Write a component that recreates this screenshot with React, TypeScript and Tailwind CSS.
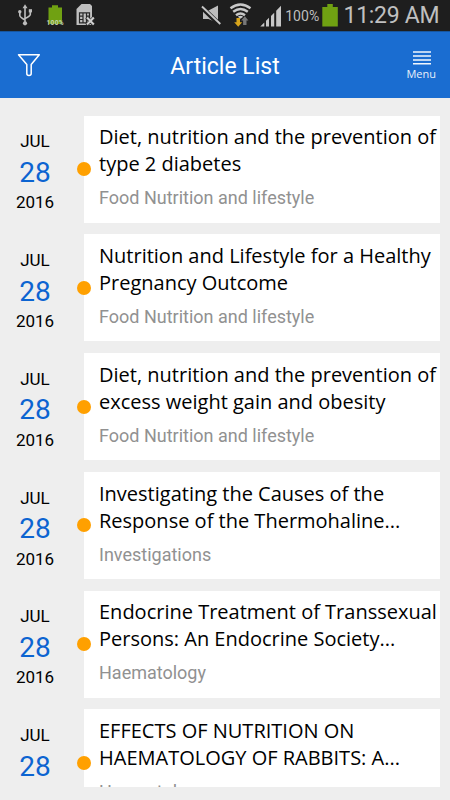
const articles = [
  { lines: ['Diet, nutrition and the prevention of', 'type 2 diabetes'], category: 'Food Nutrition and lifestyle' },
  { lines: ['Nutrition and Lifestyle for a Healthy', 'Pregnancy Outcome'], category: 'Food Nutrition and lifestyle' },
  { lines: ['Diet, nutrition and the prevention of', 'excess weight gain and obesity'], category: 'Food Nutrition and lifestyle' },
  { lines: ['Investigating the Causes of the', 'Response of the Thermohaline...'], category: 'Investigations' },
  { lines: ['Endocrine Treatment of Transsexual', 'Persons: An Endocrine Society...'], category: 'Haematology' },
  { lines: ['EFFECTS OF NUTRITION ON', 'HAEMATOLOGY OF RABBITS: A...'], category: 'Haematology' },
];

function StatusIcons() {
  return (
    <svg className="block h-[31px] w-[340px] shrink-0" viewBox="0 0 340 31" fill="none">
      <g stroke="#bdbdbd" strokeWidth="1.6">
        <path d="M25 7v16M19.800 12v3.500q0 1.500 5.200 4.500M30.300 11v3.500q0 1.500-5.300 4" />
      </g>
      <g fill="#bdbdbd">
        <path d="M25 4.300l2.500 4h-5z" />
        <circle cx="25" cy="23.300" r="2.100" />
        <circle cx="19.800" cy="11.800" r="1.700" />
        <path d="M28.800 9.200h3.200v3.200h-3.200z" />
      </g>
      <path d="M48.500 7.500h3.500v-2.200h6v2.200h4V24H48.500z" fill="#70a112" />
      <text x="46.500" y="24.500" fontSize="6.500" fontWeight="700" textLength="17" fill="#c9d3b4" className="font-['Roboto',sans-serif]">100%</text>
      <path d="M81.500 4h8.500l2 2v19H76.500V9z" fill="#c0c0c0" />
      <g stroke="#292929" strokeWidth="1.200">
        <path d="M79.500 12.800h10v10h-10zM83 13v10M86.500 13v10M79.500 16.200h3.500M79.500 19.500h3.500M86.500 16.200h3" />
        <path d="M86.500 17.500l7.500 7.500m0-7.500l-7.500 7.500" strokeWidth="3.600" />
      </g>
      <path d="M87 17.500l6.800 7m0-7l-6.800 7" stroke="#d0d0d0" strokeWidth="2.100" />
      <path d="M203 10.500h5.500L218 5.500v17.500l-9.500-4H203z" fill="#bdbdbd" />
      <path d="M201.500 7L220 25" stroke="#1e1e1e" strokeWidth="4.600" />
      <path d="M202 6.500L220.300 24" stroke="#c6c6c6" strokeWidth="1.900" />
      <g stroke="#c8c8c8" strokeWidth="2.400">
        <path d="M230.500 8.300q10-7.600 20 0M233.200 11.800q7.300-5.600 14.600 0M236 15.200q4.500-3.600 9 0" />
      </g>
      <path d="M237.800 16.800q2.700-2 5.400 0l-2.700 2z" fill="#c8c8c8" />
      <path d="M236.500 18h3.500v4.300h2.200L238.200 26.800l-4-4.500h2.300z" fill="#d8a51b" />
      <path d="M243.100 25h3.400v-4.500h1.900L244.900 16.300 241.200 20.500h1.900z" fill="#777" />
      <g fill="#c6c6c6">
        <path d="M260.300 26.500l4-4v4zM266 20.800l3-3v8.700h-3zM271 16l3.200-3.200v13.700H271zM276.200 10.800l4.800-5v20.700h-4.800z" />
      </g>
      <text x="285.200" y="21" fontSize="14.500" textLength="34" lengthAdjust="spacingAndGlyphs" fill="#bdbdbd" className="font-['Roboto',sans-serif]">100%</text>
      <path d="M322.300 7h5V4h5.500v3h5v19.500h-15.500z" fill="#70a112" />
    </svg>
  );
}

export default function App() {
  return (
    <div className="flex h-[800px] w-[450px] flex-col overflow-hidden bg-[#eeeeee] font-['Roboto',sans-serif] text-black">
      <div className="flex h-[31px] shrink-0 items-center bg-[#1e1e1e]">
        <StatusIcons />
        <span className="ml-[3.500px] w-24 whitespace-nowrap text-[23px] leading-[31px] tracking-[-0.300px] text-[#c0c0c0]">11:29 AM</span>
      </div>
      <header className="flex h-[67px] shrink-0 items-center border-t border-[#17569f] bg-[#1a6dd1] text-white">
        <div className="w-[100px] pl-[17px]">
          <svg className="h-6 w-6" viewBox="0 0 24 24" fill="none" stroke="white" strokeWidth="1.500" strokeLinejoin="round">
            <path d="M1.500 1.700h20.800L14.200 11.500v9q0 2-2.200 2t-2.200-2v-9z" />
          </svg>
        </div>
        <h1 className="w-[250px] pt-[3px] text-center text-[23px] leading-7">Article List</h1>
        <div className="flex w-[100px] flex-col items-end pr-[14px] pt-0.5">
          <svg className="mr-[5px] h-[14px] w-[18px]" viewBox="0 0 18 14" fill="#f2f7fd">
            <path d="M0 .2h18v1.600H0zM0 4.200h18v1.600H0zM0 8.200h18v1.600H0zM0 12h18v1.600H0z" />
          </svg>
          <span className="pt-px font-['Open_Sans',sans-serif] text-[11px] leading-[15px] text-[#e8f0fa]">Menu</span>
        </div>
      </header>
      <main className="mt-[17.600px] flex h-[671.400px] shrink-0 flex-col gap-[11.750px] overflow-hidden">
        {articles.map((a, i) => (
          <article key={i} className="flex h-[107px] w-[440px] shrink-0">
            <div className="flex w-[70px] flex-col items-center pt-[14.700px]">
              <span className="text-[17px] leading-[22px]">JUL</span>
              <span className="pt-[1.700px] text-[28px] leading-[38px] text-[#0c64d1]">28</span>
              <span className="mt-[-0.700px] text-[17px] leading-[22px]">2016</span>
            </div>
            <div className="flex w-[14px] items-center">
              <i className="relative left-[7px] size-[14px] shrink-0 rounded-full bg-[#ffa000]" />
            </div>
            <div className="w-[356px] bg-white pl-[15px] pt-[7.750px]">
              <h2 className="whitespace-nowrap font-['Open_Sans',sans-serif] text-[20px] leading-[27px]">
                {a.lines[0]}
                <br />
                {a.lines[1]}
              </h2>
              <p className="mt-[9px] text-[18px] leading-6 text-[#919191]">{a.category}</p>
            </div>
          </article>
        ))}
      </main>
    </div>
  );
}
